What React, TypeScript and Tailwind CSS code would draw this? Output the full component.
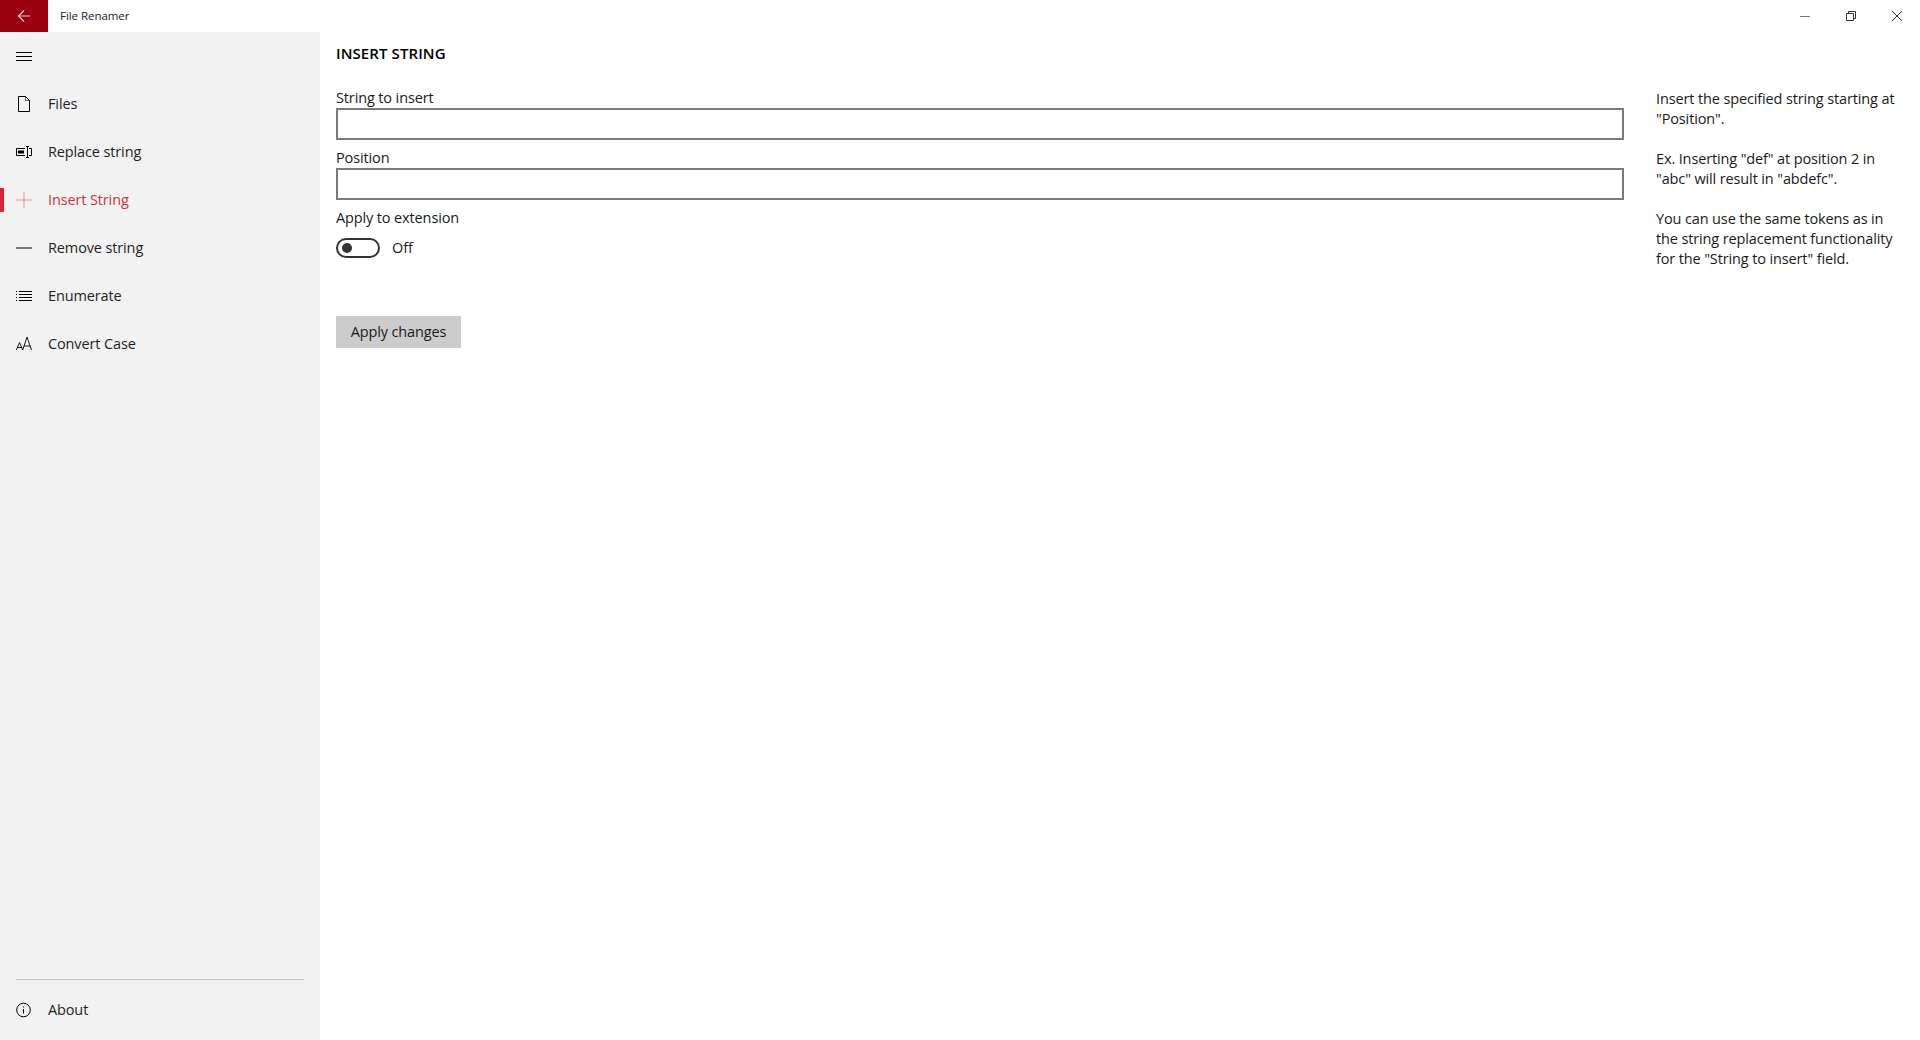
import React from "react";

const font = { fontFamily: '"Open Sans", "Noto Sans", sans-serif' };

function NavRow({ icon, label, active }: { icon: React.ReactNode; label: string; active?: boolean }) {
  return (
    <div className={`relative flex h-12 items-center ${active ? "text-[#d13438]" : "text-[#1f1f1f]"}`}>
      {active && <div className="absolute left-0 top-3 h-6 w-1 bg-[#d0293a]" />}
      <div className="flex w-12 shrink-0 items-center justify-center">{icon}</div>
      <span className="mb-[1px] text-[14.5px] tracking-[-0.13px]">{label}</span>
    </div>
  );
}

const FileIcon = (
  <svg width="16" height="16" viewBox="0 0 16 16" fill="none" stroke="#000" strokeWidth="1">
    <path d="M2.5 0.5H9.5L13.5 4.5V15.5H2.5Z" />
    <path d="M9.5 0.5V4.5H13.5" strokeWidth="0.6" />
  </svg>
);
const ReplaceIcon = (
  <svg width="16" height="16" viewBox="0 0 16 16" fill="none" stroke="#000" strokeWidth="1">
    <path d="M9 4.5H0.5V11.5H9" />
    <rect x="2" y="6.5" width="6" height="3" fill="#000" stroke="none" />
    <path d="M11.5 3V13M10 2.5H13M10 13.5H13" />
    <path d="M13 4.5H15.5V11.5H13" />
  </svg>
);
const PlusIcon = (
  <svg width="16" height="16" viewBox="0 0 16 16" fill="none" stroke="#e88f97" strokeWidth="1">
    <path d="M0 8H16M8 0V16" />
  </svg>
);
const MinusIcon = (
  <svg width="16" height="16" viewBox="0 0 16 16" fill="none" stroke="#7a7a7a" strokeWidth="2">
    <path d="M0 8H16" />
  </svg>
);
const ListIcon = (
  <svg width="16" height="16" viewBox="0 0 16 16" fill="none" stroke="#000" strokeWidth="1">
    <path d="M3 3.5H16M3 6.5H16M3 9.5H16M3 12.5H16" />
    <path d="M0 3.5H1M0 6.5H1M0 9.5H1M0 12.5H1" />
  </svg>
);
const CaseIcon = (
  <svg width="16" height="16" viewBox="0 0 16 16" fill="none" stroke="#000" strokeWidth="0.9">
    <path d="M0.3 14L3.5 6.5L6.7 14M1.4 11.5H5.6" />
    <path d="M6.7 14L11 1L15.5 14M8 10H14" />
  </svg>
);
const InfoIcon = (
  <svg width="16" height="16" viewBox="0 0 16 16" fill="none" stroke="#000" strokeWidth="1">
    <circle cx="7.5" cy="8" r="6.8" />
    <path d="M7.5 7V11.5M7.5 4.5V5.5" />
  </svg>
);

function Field({ label }: { label: string }) {
  return (
    <div>
      <div className="h-[20px] text-[14.5px] leading-[20px] tracking-[-0.13px] text-[#1a1a1a]">{label}</div>
      <div className="h-8 border-2 border-[#7a7a7a] bg-white" />
    </div>
  );
}

export default function App() {
  return (
    <div style={font} className="flex h-[1040px] w-[1920px] flex-col overflow-hidden bg-white text-[#1a1a1a]">
      <header className="flex h-8 shrink-0 items-center">
        <div className="flex h-8 w-12 items-center justify-center bg-[#9b000e]">
          <svg width="14" height="14" viewBox="0 0 14 14" fill="none" stroke="#f3c6ca" strokeWidth="1.2">
            <path d="M13 7H1.5M7 1.5L1.5 7L7 12.5" />
          </svg>
        </div>
        <span className="ml-3 text-[11.5px] tracking-[-0.05px] text-[#222]">File Renamer</span>
        <div className="ml-auto flex items-center">
          <div className="flex h-8 w-[46px] items-center justify-center">
            <svg width="10" height="10" viewBox="0 0 10 10" stroke="#777" fill="none"><path d="M0 5.5H10" /></svg>
          </div>
          <div className="flex h-8 w-[46px] items-center justify-center">
            <svg width="10" height="10" viewBox="0 0 10 10" stroke="#333" fill="none">
              <path d="M0.5 2.5H7.5V9.5H0.5Z" /><path d="M2.5 2.5V0.5H9.5V7.5H7.5" />
            </svg>
          </div>
          <div className="flex h-8 w-[46px] items-center justify-center">
            <svg width="10" height="10" viewBox="0 0 10 10" stroke="#333" fill="none"><path d="M0 0L10 10M10 0L0 10" /></svg>
          </div>
        </div>
      </header>
      <div className="flex min-h-0 flex-1">
        <aside className="flex w-[320px] shrink-0 flex-col bg-[#f2f2f2]">
          <div className="flex h-12 w-12 items-center justify-center">
            <svg width="16" height="16" viewBox="0 0 16 16" stroke="#000" fill="none">
              <path d="M0 4.5H16M0 8.5H16M0 12.5H16" />
            </svg>
          </div>
          <NavRow icon={FileIcon} label="Files" />
          <NavRow icon={ReplaceIcon} label="Replace string" />
          <NavRow icon={PlusIcon} label="Insert String" active />
          <NavRow icon={MinusIcon} label="Remove string" />
          <NavRow icon={ListIcon} label="Enumerate" />
          <NavRow icon={CaseIcon} label="Convert Case" />
          <div className="mt-auto mx-4 h-[1px] bg-[#c0c0c0]" />
          <div className="mt-[6px] mb-[6px]">
            <NavRow icon={InfoIcon} label="About" />
          </div>
        </aside>
        <main className="flex min-w-0 flex-1 pl-4 pr-4">
          <div className="w-[1288px] shrink-0">
            <h1 className="mt-[10px] h-[22px] text-[15px] font-semibold leading-[22px] tracking-[0.1px] text-black">INSERT STRING</h1>
            <div className="mt-[24px] flex flex-col gap-[8px]">
              <Field label="String to insert" />
              <Field label="Position" />
            </div>
            <div className="mt-[8px] h-[20px] text-[14.5px] leading-[20px] tracking-[-0.13px]">Apply to extension</div>
            <div className="mt-[10px] flex h-5 items-center">
              <div className="relative h-5 w-11 rounded-full border-2 border-[#333]">
                <div className="absolute left-[4px] top-[3px] h-[10px] w-[10px] rounded-full bg-[#333]" />
              </div>
              <span className="mb-[1px] ml-3 text-[14.5px] tracking-[-0.13px]">Off</span>
            </div>
            <div className="mt-[58px] flex h-8 w-[125px] items-center justify-center bg-[#cccccc] pb-[1px] text-[14.5px] tracking-[-0.13px]">
              Apply changes
            </div>
          </div>
          <div className="ml-8 mt-[57px] w-[250px] text-[14.5px] leading-[20px] tracking-[-0.13px] text-[#1a1a1a]">
            <p>Insert the specified string starting at<br />"Position".</p>
            <p className="mt-5">Ex. Inserting "def" at position 2 in<br />"abc" will result in "abdefc".</p>
            <p className="mt-5">You can use the same tokens as in<br />the string replacement functionality<br />for the "String to insert" field.</p>
          </div>
        </main>
      </div>
    </div>
  );
}
